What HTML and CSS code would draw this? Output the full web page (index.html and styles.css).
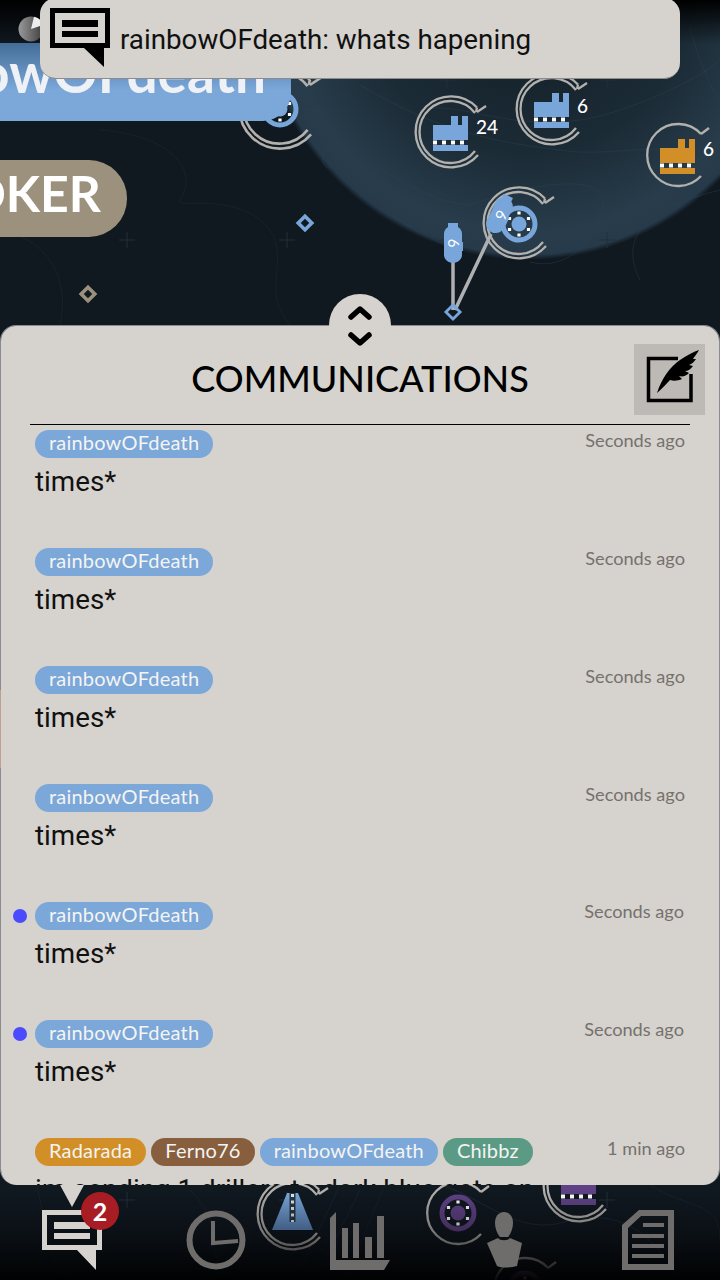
FILE: index.html
```html
<!DOCTYPE html>
<html lang="en">
<head>
    <meta charset="UTF-8">
    <title>Communications</title>
    <link rel="stylesheet" href="styles.css">
</head>
<body>
    <svg class="map" viewBox="0 0 720 1280" width="720" height="1280">
        <defs>
            <radialGradient id="zone" gradientUnits="userSpaceOnUse" cx="528" cy="-10" r="270">
                <stop offset="0.35" stop-color="#17252e"/>
                <stop offset="0.6" stop-color="#1b2b36"/>
                <stop offset="0.9" stop-color="#283c4b"/>
                <stop offset="0.98" stop-color="#263a49"/>
                <stop offset="1" stop-color="#263a49" stop-opacity="0"/>
            </radialGradient>
            <linearGradient id="topfade" x1="0" y1="0" x2="0" y2="1">
                <stop offset="0" stop-color="#000"/>
                <stop offset="1" stop-color="#000" stop-opacity="0"/>
            </linearGradient>
            <linearGradient id="botfade" x1="0" y1="0" x2="0" y2="1">
                <stop offset="0" stop-color="#000" stop-opacity="0"/>
                <stop offset="0.5" stop-color="#000" stop-opacity="0.35"/>
                <stop offset="1" stop-color="#000" stop-opacity="0.95"/>
            </linearGradient>
            <linearGradient id="road" x1="0" y1="0" x2="0" y2="1">
                <stop offset="0" stop-color="#7ba7d9"/>
                <stop offset="1" stop-color="#5f8ac0"/>
            </linearGradient>
            <linearGradient id="ball" x1="0" y1="0" x2="1" y2="0">
                <stop offset="0" stop-color="#9a9a9a"/>
                <stop offset="1" stop-color="#3c3c3c"/>
            </linearGradient>

            <g id="ring">
                <path d="M24 -19A31 31 0 1 0 24 19" class="ring-line"/>
                <path d="M26 -24.500A35.500 35.500 0 1 0 27 23" class="ring-line"/>
                <path d="M26 -20L35 -26M26 -24.500L25 -20" class="ring-line"/>
            </g>
            <g id="ring-single">
                <path d="M23 -21A31 31 0 1 0 23 21" class="ring-line"/>
                <path d="M23 -21L31 -27" class="ring-line"/>
            </g>
            <g id="factory">
                <path d="M-18 -7H0V-16H7V-7H11V-16H17V8H-18Z"/>
                <rect x="-18" y="13" width="35" height="6"/>
                <path d="M-18 10.500H18" class="dash"/>
            </g>
            <g id="hub">
                <circle r="16" class="hub-ring"/>
                <circle r="7.500"/>
                <path d="M0 -11h0M9.500 -5.500h0M9.500 5.500h0M0 11h0M-9.500 5.500h0M-9.500 -5.500h0" class="hub-dots"/>
            </g>
            <g id="pod">
                <path d="M-5 -20H5V-16C8 -14 9 -12 9 -9V-1H10V8H9V12C9 16 5 20 0 20C-5 20 -9 16 -9 12V-9C-9 -12 -8 -14 -5 -16Z"/>
            </g>
        </defs>

        <rect class="map-ground" width="720" height="1280"/>
        <circle cx="528" cy="-10" r="270" fill="url(#zone)"/>

        <g class="contour faint">
            <path d="M100 130C170 135 200 170 180 200C175 210 240 190 270 230C290 260 260 290 290 325"/>
            <path d="M0 230C50 240 70 280 60 325"/>
            <path d="M0 1100C60 1200 30 1240 70 1280"/>
            <path d="M190 1190C230 1230 200 1250 230 1280"/>
            <path d="M650 1185C690 1210 720 1200 720 1240"/>
            <path d="M340 1185L300 1270M360 1190L320 1270M385 1185L345 1280"/>
        </g>
        <g class="contour">
            <path d="M360 85C420 120 470 140 560 150C620 160 680 130 720 175"/>
            <path d="M365 165C400 175 420 200 470 205C540 180 620 170 600 215C590 250 560 270 530 262"/>
            <path d="M420 110C460 100 500 130 580 120C620 115 700 80 720 60"/>
            <path d="M365 170C380 220 420 235 460 250"/>
            <path d="M640 280C620 240 640 210 720 190"/>
            <path d="M690 30C700 60 710 90 720 100"/>
            <path d="M305 110C330 105 330 135 322 132C310 125 305 118 305 110Z"/>
            <path d="M325 150C335 150 340 165 330 168C322 168 320 155 325 150Z"/>
            <path d="M440 1185C480 1195 520 1240 570 1220C620 1210 650 1230 680 1280"/>
        </g>

        <path class="cross" d="M127 232V248M119 240H135M287 232V248M279 240H295M447 72V88M439 80H455M607 72V88M599 80H615M447 232V248M439 240H455M607 232V248M599 240H615M127 1192V1208M119 1200H135M287 1192V1208M279 1200H295M607 1192V1208M599 1200H615"/>

        <rect class="strip" x="0" y="690" width="2" height="78"/>

        <use href="#ring" transform="translate(280 108) scale(1.15)"/>
        <use href="#hub" x="280" y="109" class="node-blue"/>

        <use href="#ring" x="451" y="132"/>
        <use href="#factory" x="451" y="132" class="node-blue"/>
        <text x="476" y="134" class="count">24</text>

        <use href="#ring" x="552" y="109"/>
        <use href="#factory" x="552" y="109" class="node-blue"/>
        <text x="577" y="113" class="count">6</text>

        <use href="#ring-single" x="678" y="155"/>
        <use href="#factory" x="678" y="155" class="node-orange"/>
        <text x="703" y="156" class="count">6</text>

        <use href="#ring" x="519" y="223"/>
        <use href="#hub" x="519" y="224" class="node-blue"/>

        <path class="link" d="M453 262V310M491 234L455 310"/>
        <use href="#pod" x="453" y="243" class="node-blue"/>
        <text class="pod-count" transform="translate(453 243) rotate(90)" y="5">6</text>
        <use href="#pod" transform="translate(500 214) rotate(25)" class="node-blue"/>
        <text class="pod-count" transform="translate(501 215) rotate(115)" y="5">6</text>

        <rect class="diamond blue" x="-4.800" y="-4.800" width="9.600" height="9.600" transform="translate(305 223) rotate(45)"/>
        <rect class="diamond blue thin" x="-5" y="-5" width="10" height="10" transform="translate(453 312) rotate(45)"/>
        <rect class="diamond tan" x="-4.800" y="-4.800" width="9.600" height="9.600" transform="translate(88 294) rotate(45)"/>

        <use href="#ring" x="293" y="1214"/>
        <path d="M287 1193H298L313 1230H272Z" fill="url(#road)"/>
        <path class="road-core" d="M292.500 1193V1222"/>
        <path class="road-dash" d="M292.500 1194V1222"/>

        <use href="#ring-single" x="458" y="1213"/>
        <use href="#hub" x="458" y="1213" class="node-purple"/>
        <use href="#ring" x="579" y="1186"/>
        <use href="#factory" x="579" y="1186" class="node-purple"/>
        <use href="#ring-single" x="525" y="1289"/>
        <use href="#hub" x="525" y="1289" class="node-purple"/>

        <rect y="1190" width="720" height="90" fill="url(#botfade)"/>
        <rect width="720" height="45" fill="url(#topfade)"/>

        <circle cx="31" cy="29" r="12.500" fill="url(#ball)"/>
        <path d="M31 29L34 16.800C39 18 42 21 43 25Z" fill="#eee"/>
    </svg>

    <div class="map-label label-blue"><span>rainbowOFdeath</span></div>
    <div class="map-label label-tan"><span>JOKER</span></div>

    <div class="toast">
        <svg class="toast-icon" viewBox="0 0 60 60" width="60" height="60">
            <path fill-rule="evenodd" d="M0 0H60V40H54V59L34 40H0Z M5 5V35H55V5Z M12 12H48V19H12Z M12 23H48V29H12Z"/>
        </svg>
        <span>rainbowOFdeath: whats hapening</span>
    </div>

    <div class="screen">
        <section class="panel">
            <div class="panel-tab">
                <svg viewBox="0 0 30 44" width="30" height="44">
                    <path d="M6 13L15 5L24 13M6 31L15 39L24 31"/>
                </svg>
            </div>
            <header class="panel-head">
                <h1>COMMUNICATIONS</h1>
                <button class="compose">
                    <svg viewBox="0 0 70 70" width="70" height="70">
                        <path class="compose-box" d="M44 13.500H14.500V55.500H57V29"/>
                        <path d="M23 48C28 33 36 22 46 15C52 11 59 7 65 5C63 9 60 12 59 14L62 14C60 17 58 19 55 20L59 21C57 24 54 26 51 26L55 28C52 31 49 32 45 31L48 34C44 36 39 36 36 35C32 39 28 44 23 48Z"/>
                    </svg>
                </button>
            </header>

            <div class="list">
                <div class="row">
                    <div class="row-top">
                        <div class="chips"><span class="chip blue">rainbowOFdeath</span></div>
                        <span class="time">Seconds ago</span>
                    </div>
                    <p>times*</p>
                </div>
                <div class="row">
                    <div class="row-top">
                        <div class="chips"><span class="chip blue">rainbowOFdeath</span></div>
                        <span class="time">Seconds ago</span>
                    </div>
                    <p>times*</p>
                </div>
                <div class="row">
                    <div class="row-top">
                        <div class="chips"><span class="chip blue">rainbowOFdeath</span></div>
                        <span class="time">Seconds ago</span>
                    </div>
                    <p>times*</p>
                </div>
                <div class="row">
                    <div class="row-top">
                        <div class="chips"><span class="chip blue">rainbowOFdeath</span></div>
                        <span class="time">Seconds ago</span>
                    </div>
                    <p>times*</p>
                </div>
                <div class="row unread">
                    <div class="row-top">
                        <div class="chips"><span class="chip blue">rainbowOFdeath</span></div>
                        <span class="time">Seconds ago</span>
                    </div>
                    <p>times*</p>
                </div>
                <div class="row unread">
                    <div class="row-top">
                        <div class="chips"><span class="chip blue">rainbowOFdeath</span></div>
                        <span class="time">Seconds ago</span>
                    </div>
                    <p>times*</p>
                </div>
                <div class="row">
                    <div class="row-top">
                        <div class="chips">
                            <span class="chip orange">Radarada</span>
                            <span class="chip brown">Ferno76</span>
                            <span class="chip blue">rainbowOFdeath</span>
                            <span class="chip green">Chibbz</span>
                        </div>
                        <span class="time">1 min ago</span>
                    </div>
                    <p>im sending 1 drillers to dark blue gets on</p>
                </div>
            </div>
        </section>

        <nav class="nav">
            <a href="#" class="nav-item nav-chat">
                <svg viewBox="0 0 60 60" width="60" height="60">
                    <path fill-rule="evenodd" d="M0 0H60V40H54V60L35 40H0Z M5 5V35H55V5Z M12 12H48V19H12Z M12 23H48V29H12Z"/>
                </svg>
                <span class="badge">2</span>
            </a>
            <a href="#" class="nav-item">
                <svg viewBox="0 0 60 60" width="60" height="60">
                    <circle class="stroke" cx="30" cy="30" r="26.500"/>
                    <path class="stroke thin" d="M27 11V33L52 31"/>
                </svg>
            </a>
            <a href="#" class="nav-item">
                <svg viewBox="0 0 60 60" width="60" height="60">
                    <path d="M0 8L6 2V50H60L54 60H0Z"/>
                    <path d="M12 18H18V48H12ZM23 13H29V48H23ZM35 27H42V48H35ZM47 6H54V48H47Z"/>
                </svg>
            </a>
            <a href="#" class="nav-item">
                <svg viewBox="0 0 60 60" width="60" height="60">
                    <path d="M30 2C36 2 39 7 39 13C39 19 36 25 34 27H26C24 25 21 19 21 13C21 7 24 2 30 2Z"/>
                    <path d="M24 28C26 31 34 31 36 28L48 33L43 56C36 58 28 58 23 56L13 33Z"/>
                </svg>
            </a>
            <a href="#" class="nav-item">
                <svg viewBox="0 0 60 60" width="60" height="60">
                    <path fill-rule="evenodd" d="M21 0H56V60H4V15Z M23 6L10 18V54H50V6Z"/>
                    <path d="M25 13H46V17H25ZM14 24H46V28H14ZM14 34H46V38H14ZM14 44H46V48H14Z"/>
                </svg>
            </a>
        </nav>
    </div>
</body>
</html>
```
FILE: styles.css
```css
* {
    box-sizing: border-box;
}
html, body {
    margin: 0;
    padding: 0;
}
body {
    position: relative;
    width: 720px;
    height: 1280px;
    overflow: hidden;
    background: #0f1720;
    font-family: "Roboto", "Liberation Sans", sans-serif;
}

/* map */
.map {
    position: absolute;
    left: 0;
    top: 0;
}
.map-ground {
    fill: #101820;
}
.contour path {
    fill: none;
    stroke: #2e4352;
    stroke-width: 1;
    opacity: 0.4;
}
.contour.faint path {
    stroke: #243440;
    opacity: 0.35;
}
.cross {
    fill: none;
    stroke: #232f3b;
    stroke-width: 1;
}
.strip {
    fill: #7d4119;
}
.ring-line {
    fill: none;
    stroke: #b3b1ad;
    stroke-width: 2.300;
}
.node-blue {
    fill: #78a6da;
    --hub: #78a6da;
}
.node-orange {
    fill: #d28f28;
}
.node-purple {
    fill: #5f4285;
    --hub: #5f4285;
}
.dash {
    fill: none;
    stroke: #fff;
    stroke-width: 4;
    stroke-dasharray: 4 5;
}
.hub-ring {
    fill: none;
    stroke: var(--hub, #78a6da);
    stroke-width: 5;
}
.hub-dots {
    fill: none;
    stroke: #fff;
    stroke-width: 3.200;
    stroke-linecap: square;
}
.count {
    fill: #fff;
    font-family: "Lato", sans-serif;
    font-size: 19px;
    font-weight: 500;
}
.pod-count {
    fill: #fff;
    font-family: "Lato", sans-serif;
    font-size: 15px;
    text-anchor: middle;
}
.link {
    fill: none;
    stroke: #aeb0b1;
    stroke-width: 3.500;
}
.diamond {
    fill: none;
    stroke-width: 3.600;
}
.diamond.blue {
    stroke: #78a6da;
}
.diamond.thin {
    stroke-width: 2.800;
}
.diamond.tan {
    stroke: #9c917c;
}
.road-core {
    fill: none;
    stroke: #26384a;
    stroke-width: 6;
}
.road-dash {
    fill: none;
    stroke: #e8e8e8;
    stroke-width: 3;
    stroke-dasharray: 3 3.500;
}

/* big name labels on the map */
.map-label {
    position: absolute;
    display: flex;
    justify-content: flex-end;
    align-items: center;
    overflow: hidden;
    color: #fff;
    font-family: "Lato", sans-serif;
    font-weight: 700;
    white-space: nowrap;
}
.label-blue {
    left: 0;
    top: 43px;
    width: 291px;
    height: 78px;
    padding: 0 25px 20px 0;
    background: linear-gradient(#436d97, #7ba7d9 60%);
    border-radius: 0 0 28px 0;
    font-size: 55px;
    color: #eef1f5;
}
.label-tan {
    left: -100px;
    top: 160px;
    width: 227px;
    height: 77px;
    padding: 0 26px 12px 0;
    background: #9c917c;
    border-radius: 38px;
    font-size: 50px;
}

/* notification */
.toast {
    position: absolute;
    left: 40px;
    top: -2px;
    width: 640px;
    height: 81px;
    display: flex;
    align-items: flex-start;
    gap: 10px;
    padding: 10px 0 0 10px;
    background: #d6d3ce;
    border-bottom: 1px solid #8d8c8a;
    border-radius: 16px;
    font-size: 27.750px;
    color: #111;
}
.toast span {
    line-height: 64px;
}
.toast-icon {
    flex: none;
    fill: #000;
}

/* panel + nav flow */
.screen {
    position: relative;
    display: flex;
    flex-direction: column;
    height: 1280px;
    padding-top: 325px;
}
.panel {
    position: relative;
    display: flex;
    flex-direction: column;
    height: 860px;
    background: #d6d3ce;
    background-clip: padding-box;
    border: 1px solid rgba(255, 255, 255, 0.5);
    border-bottom: 0;
    border-radius: 16px;
}
.panel-tab {
    position: absolute;
    left: 328px;
    top: -32px;
    width: 62px;
    height: 62px;
    display: flex;
    justify-content: center;
    align-items: center;
    padding-top: 1px;
    background: #d6d3ce;
    border-radius: 50%;
}
.panel-tab svg {
    fill: none;
    stroke: #000;
    stroke-width: 5.500;
    stroke-linecap: round;
    stroke-linejoin: round;
}
.panel-head {
    position: relative;
    flex: none;
    height: 99px;
    margin: 0 29px;
    border-bottom: 1px solid #000;
}
.panel-head h1 {
    margin: 0;
    padding-top: 28px;
    text-align: center;
    font-family: "Lato", sans-serif;
    font-size: 36px;
    line-height: 48px;
    font-weight: 500;
    color: #000;
}
.compose {
    position: absolute;
    right: -15px;
    top: 18px;
    width: 71px;
    height: 71px;
    padding: 0;
    border: 0;
    background: #bdb9b4;
}
.compose svg {
    display: block;
}
.compose-box {
    fill: none;
    stroke: #000;
    stroke-width: 3.500;
}

/* message list */
.list {
    flex: 1;
    min-height: 0;
    overflow: hidden;
    border-radius: 0 0 16px 16px;
}
.row {
    position: relative;
    height: 118px;
    padding: 5px 34px 0 34px;
}
.row p {
    margin: 6px 0 0;
    font-size: 27.750px;
    line-height: 36px;
    color: #111;
    white-space: nowrap;
}
.row-top {
    display: flex;
    justify-content: space-between;
    align-items: flex-start;
}
.chips {
    display: flex;
    gap: 5px;
}
.chip {
    height: 28px;
    padding: 0 14px;
    border-radius: 14px;
    font-family: "Lato", sans-serif;
    font-size: 20px;
    letter-spacing: 0.2px;
    line-height: 25px;
    color: #f4f4f2;
}
.chip.blue {
    background: #7ba7d9;
}
.chip.orange {
    background: #d28f28;
}
.chip.brown {
    background: #875f3e;
}
.chip.green {
    background: #5b9b85;
}
.time {
    font-family: "Lato", sans-serif;
    font-size: 18.200px;
    line-height: 20px;
    color: #75716d;
}
.row.unread::before {
    content: "";
    position: absolute;
    left: 12px;
    top: 12px;
    width: 14px;
    height: 14px;
    border-radius: 50%;
    background: #4a4aff;
}
.row.unread .time {
    margin: -1px 1px 0 0;
}

/* bottom nav */
.nav {
    flex: 1;
    display: flex;
}
.nav-item {
    position: relative;
    flex: 1;
    display: flex;
    justify-content: center;
    padding-top: 25px;
    fill: #6f6d6b;
}
.nav-item svg {
    display: block;
}
.stroke {
    fill: none;
    stroke: #6f6d6b;
    stroke-width: 6;
}
.stroke.thin {
    stroke-width: 4;
}
.nav-chat {
    fill: #d6d3ce;
}
.nav-chat::before {
    content: "";
    position: absolute;
    left: 60px;
    top: 0;
    border-top: 22px solid #d6d3ce;
    border-left: 12px solid transparent;
    border-right: 12px solid transparent;
}
.badge {
    position: absolute;
    left: 81px;
    top: 7px;
    width: 38px;
    height: 38px;
    border-radius: 50%;
    background: #a81c24;
    text-align: center;
    color: #fff;
    font-family: "Lato", sans-serif;
    font-size: 25px;
    font-weight: 700;
    line-height: 38px;
}
```
